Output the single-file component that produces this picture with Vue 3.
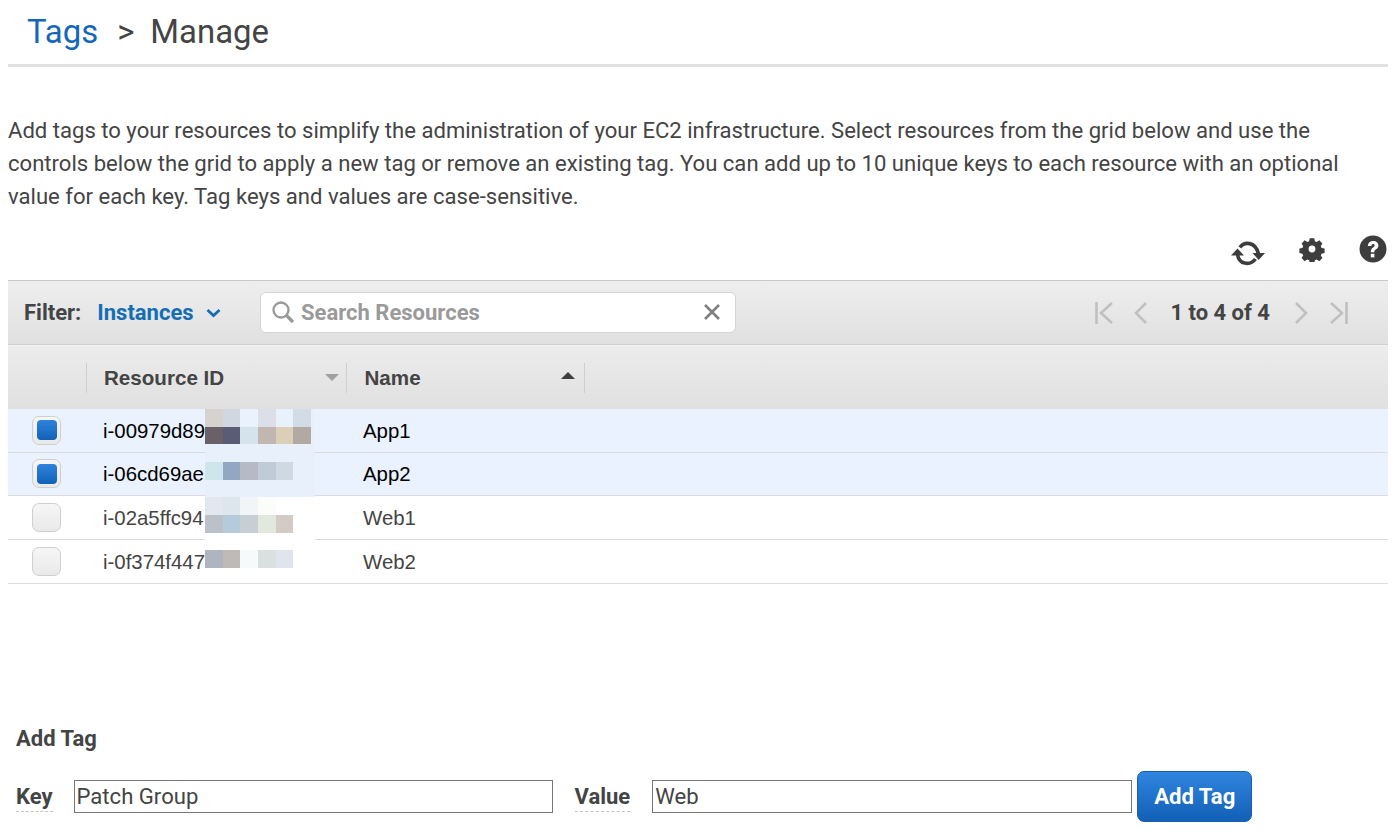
<script setup>
const rows = [
  { id: 'i-00979d89', name: 'App1', on: true },
  { id: 'i-06cd69ae', name: 'App2', on: true },
  { id: 'i-02a5ffc94', name: 'Web1', on: false },
  { id: 'i-0f374f447', name: 'Web2', on: false }
]
const mosaic = [
  'd5d2d0','d0d7e0','eaf2fd','dcdfe7','e9f1fc','d1dce7',
  '6a6068','5a5b75','d5e3ec','c1b7b0','dccfb8','b3a9a3',
  'e8f1fb','e8f1fb','e8f1fb','e8f1fb','e8f1fb','e8f1fb',
  'cfe5ec','93a7c3','b6bac4','bfccd8','cfd9e2','e8f1fb',
  'e8f1fb','e8f1fb','e8f1fb','e8f1fb','e8f1fb','e8f1fb',
  'e3e7ef','dde6ec','f2f5f8','fbfdfa','ffffff','ffffff',
  'bcc1c9','b5cadc','c8cfd4','e3e8de','d3cbc6','ffffff',
  'ffffff','ffffff','ffffff','ffffff','ffffff','ffffff',
  'aeb5c1','bfbab7','f7fafb','d8e1df','dfe4ed','ffffff'
]
</script>

<template>
  <div class="page">
    <header class="crumb">
      <a class="crumb-link">Tags</a>
      <span class="crumb-sep">&gt;</span>
      <span>Manage</span>
    </header>

    <p class="intro">Add tags to your resources to simplify the administration of your EC2 infrastructure. Select resources from the grid below and use the controls below the grid to apply a new tag or remove an existing tag. You can add up to 10 unique keys to each resource with an optional value for each key. Tag keys and values are case-sensitive.</p>

    <div class="tools">
      <svg class="tool-refresh" width="34" height="26" viewBox="0 0 34 26">
        <path d="M9 7.500C13 1.500 24.500 1 27.500 14" fill="none" stroke="#3d3d3d" stroke-width="3.600"/>
        <path d="M6.500 14C7.500 24.500 19 26 24.500 19" fill="none" stroke="#3d3d3d" stroke-width="3.600"/>
        <path d="M21.500 13h12.500l-6.300 7z" fill="#3d3d3d"/>
        <path d="M0 15.500h13l-6.500-7z" fill="#3d3d3d"/>
      </svg>
      <svg class="tool-gear" width="26" height="26" viewBox="0 0 26 26">
        <path fill="#3d3d3d" fill-rule="evenodd" d="M10.500 1h5l.7 3.300 2 .9 2.900-1.800 3.500 3.500-1.800 2.900.8 2 3.400.7v5l-3.400.7-.8 2 1.800 2.900-3.500 3.500-2.900-1.800-2 .8-.7 3.400h-5l-.7-3.400-2-.8-2.900 1.800-3.500-3.500 1.800-2.900-.9-2-3.300-.7v-5l3.300-.7.9-2-1.800-2.900 3.500-3.500 2.900 1.800 2-.9zM13 9.200a3.800 3.800 0 1 0 0 7.600 3.800 3.800 0 0 0 0-7.600z" transform="translate(1.300 1.300) scale(.9)"/>
      </svg>
      <svg class="tool-help" width="28" height="28" viewBox="0 0 28 28">
        <circle cx="14" cy="14" r="13.500" fill="#3d3d3d"/>
        <path d="M8.800 11c.2-3.200 2.400-5 5.400-5 3.100 0 5.200 1.900 5.200 4.400 0 2-1.100 3.100-2.600 4.100-1.100.8-1.500 1.200-1.500 2.700h-3.500c0-2.500.8-3.600 2.300-4.700 1-.7 1.600-1.200 1.600-2 0-1-.7-1.500-1.600-1.500-1 0-1.600.7-1.700 2z" fill="#fff"/>
        <rect x="11.800" y="18.800" width="3.600" height="3.600" fill="#fff"/>
      </svg>
    </div>

    <section class="grid">
      <div class="toolbar">
        <div class="filter">
          <span class="filter-label">Filter:</span>
          <span class="filter-value">Instances</span>
          <svg width="15" height="10" viewBox="0 0 15 10"><path d="M1.500 2l6 5.500 6-5.500" fill="none" stroke="#146eb4" stroke-width="2.800"/></svg>
        </div>
        <div class="search">
          <svg width="24" height="24" viewBox="0 0 24 24">
            <circle cx="10" cy="10" r="7.500" fill="none" stroke="#999" stroke-width="2.300"/>
            <path d="M15.500 15.500l6.500 6.500" stroke="#999" stroke-width="3.200"/>
          </svg>
          <span class="search-text">Search Resources</span>
          <svg class="search-x" width="18" height="18" viewBox="0 0 18 18"><path d="M2 2l14 14M16 2L2 16" stroke="#808080" stroke-width="2.600"/></svg>
        </div>
        <div class="pager">
          <svg class="p-first" width="18" height="22" viewBox="0 0 18 22"><path d="M1.500 0v22" stroke="#c0c0c0" stroke-width="2.600"/><path d="M17 1L6 11l11 10" fill="none" stroke="#c0c0c0" stroke-width="2.600"/></svg>
          <svg class="p-prev" width="13" height="22" viewBox="0 0 13 22"><path d="M12 1L2 11l10 10" fill="none" stroke="#c0c0c0" stroke-width="2.600"/></svg>
          <span class="p-text">1 to 4 of 4</span>
          <svg class="p-next" width="13" height="22" viewBox="0 0 13 22"><path d="M1 1l10 10L1 21" fill="none" stroke="#c0c0c0" stroke-width="2.600"/></svg>
          <svg class="p-last" width="18" height="22" viewBox="0 0 18 22"><path d="M16.500 0v22" stroke="#c0c0c0" stroke-width="2.600"/><path d="M1 1l11 10L1 21" fill="none" stroke="#c0c0c0" stroke-width="2.600"/></svg>
        </div>
      </div>

      <div class="head">
        <div class="col col-check"></div>
        <div class="col col-id">
          <span>Resource ID</span>
          <i class="tri tri-down"></i>
        </div>
        <div class="col col-name">
          <span>Name</span>
          <i class="tri tri-up"></i>
        </div>
      </div>

      <div class="body">
        <div v-for="r in rows" :key="r.id" class="row" :class="{ on: r.on }">
          <div class="cell-check"><span class="box"><span v-if="r.on" class="box-fill"></span></span></div>
          <div class="cell-id">{{ r.id }}</div>
          <div class="cell-name">{{ r.name }}</div>
        </div>
        <div class="mosaic">
          <i v-for="(c, n) in mosaic" :key="n" :style="{ background: '#' + c }"></i>
        </div>
      </div>
    </section>

    <section class="add">
      <h3 class="add-title">Add Tag</h3>
      <div class="add-row">
        <label class="lbl lbl-key">Key</label>
        <input class="txt txt-key" value="Patch Group" readonly />
        <label class="lbl lbl-value">Value</label>
        <input class="txt txt-value" value="Web" readonly />
        <button class="btn">Add Tag</button>
      </div>
    </section>
  </div>
</template>

<style scoped>
.page {
  width: 1380px;
  margin-left: 8px;
  font-family: Roboto, "Liberation Sans", sans-serif;
  color: #444;
  height: 838px;
  overflow: hidden;
}
.crumb {
  height: 64px;
  border-bottom: 3px solid #e1e1e1;
  padding-left: 19px;
  font-size: 32.900px;
  line-height: 64px;
  display: flex;
  box-sizing: content-box;
}
.crumb-link { color: #1467b8; }
.crumb-sep { margin: 0 16px 0 19px; }
.intro {
  margin: 47px 0 0;
  font-size: 22.080px;
  line-height: 33px;
  width: 1350px;
}
.tools {
  height: 67px;
  display: flex;
  justify-content: flex-end;
  align-items: flex-start;
  padding-top: 24px;
  box-sizing: border-box;
}
.tool-refresh { margin-top: 3px; margin-right: 34px; }
.tool-gear { margin-top: -1px; margin-right: 34px; }
.tool-help { margin-top: -2px; margin-right: 1px; }
.toolbar {
  height: 65px;
  box-sizing: border-box;
  border-top: 1px solid #c8c8c8;
  border-bottom: 1px solid #cfcfcf;
  background: linear-gradient(#eeeeee, #e0e0e0);
  display: flex;
  align-items: center;
}
.filter {
  width: 252px;
  padding-left: 16px;
  box-sizing: border-box;
  display: flex;
  align-items: center;
  font-size: 22px;
  font-weight: 700;
}
.filter-label { margin-right: 16px; }
.filter-value { color: #146eb4; margin-right: 12px; }
.search {
  width: 476px;
  height: 41px;
  box-sizing: border-box;
  background: #fff;
  border: 1px solid #d4d4d4;
  border-radius: 6px;
  display: flex;
  align-items: center;
  padding-left: 10px;
  margin-top: -1px;
}
.search-text {
  margin-left: 6px;
  font-size: 22px;
  font-weight: 700;
  color: #9a9a9a;
}
.search-x { margin-left: auto; margin-right: 14px; }
.pager {
  margin-left: auto;
  margin-right: 40px;
  display: flex;
  align-items: center;
  font-size: 22px;
  font-weight: 700;
}
.p-first { margin-right: 21px; }
.p-text { margin: 0 25px 0 23px; white-space: nowrap; }
.p-last { margin-left: 22px; }
.head {
  height: 64px;
  box-sizing: border-box;
  border-top: 1px solid #f4f4f4;
  background: linear-gradient(#ececec, #e0e0e0);
  display: flex;
  align-items: center;
  font-family: "Liberation Sans", Arial, sans-serif;
  font-size: 20.600px;
  font-weight: 700;
}
.col {
  height: 30px;
  box-sizing: border-box;
  display: flex;
  align-items: center;
}
.col-check { width: 79px; border-right: 1px solid #cfcfcf; }
.col-id {
  width: 260px;
  padding-left: 17px;
  border-right: 1px solid #cfcfcf;
}
.col-name {
  width: 237.500px;
  padding-left: 17.500px;
  border-right: 1px solid #cfcfcf;
}
.tri {
  margin-left: auto;
  width: 0;
  height: 0;
  border-left: 7px solid transparent;
  border-right: 7px solid transparent;
}
.tri-down { border-top: 7px solid #a0a0a0; margin-right: 7px; }
.tri-up { border-bottom: 7px solid #3f3f3f; margin-right: 9px; margin-top: -5px; }
.body { position: relative; }
.row {
  height: 43.670px;
  box-sizing: border-box;
  border-bottom: 1px solid #dcdcdc;
  display: flex;
  align-items: center;
  font-family: "Liberation Sans", Arial, sans-serif;
  font-size: 20.400px;
  color: #444;
}
.row.on { background: #e9f2fe; color: #000; }
.cell-check { width: 95px; padding-left: 24px; box-sizing: border-box; display: flex; }
.cell-id { width: 260px; padding-top: 2px; }
.cell-name { padding-top: 2px; }
.box {
  width: 29px;
  height: 29px;
  box-sizing: border-box;
  border: 1px solid #cfcfcf;
  border-radius: 7px;
  background: linear-gradient(#f6f6f6, #e9e9e9);
  display: flex;
  align-items: center;
  justify-content: center;
}
.box-fill {
  width: 20px;
  height: 20px;
  border-radius: 4px;
  background: linear-gradient(#2f83dc, #1261b8);
}
.mosaic {
  position: absolute;
  left: 197px;
  top: 0;
  width: 110px;
  height: 162px;
  display: grid;
  grid-template-columns: repeat(6, 17.670px);
  grid-auto-rows: 17.670px;
  background: linear-gradient(#e8f1fb 88px, #fff 88px);
}
.add { margin-top: 140px; padding-left: 8px; }
.add-title {
  margin: 0;
  font-size: 22px;
  line-height: 30px;
  font-weight: 700;
}
.add-row {
  display: flex;
  align-items: center;
  height: 51px;
  margin-top: 17px;
}
.lbl {
  font-size: 22px;
  font-weight: 700;
  line-height: 28px;
  border-bottom: 1px dashed #c4c4c4;
  margin-top: 2px;
}
.txt {
  height: 33px;
  box-sizing: border-box;
  border: 1px solid #767676;
  padding: 0 2px 2px;
  font-family: Roboto, sans-serif;
  font-size: 22.100px;
  color: #444;
  outline: none;
  background: #fff;
  border-radius: 0;
  margin-top: 1px;
}
.txt-key { width: 479px; margin-left: 21px; margin-right: 22px; }
.txt-value { width: 480px; margin-left: 22px; margin-right: 5px; }
.btn {
  width: 115px;
  height: 51px;
  box-sizing: border-box;
  border: 1px solid #1a5fa8;
  border-radius: 7px;
  background: linear-gradient(#3085de, #1260b7);
  color: #fff;
  font-family: Roboto, sans-serif;
  font-size: 22.100px;
  font-weight: 700;
  padding: 0;
}
</style>
